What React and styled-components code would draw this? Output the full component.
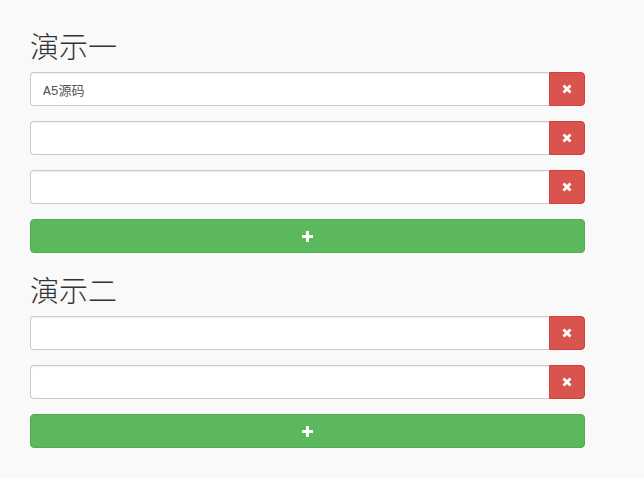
import React from 'react'
import styled, { createGlobalStyle } from 'styled-components'

const Global = createGlobalStyle`
  html, body {
    margin: 0;
    background: #f9f9f9;
    font-family: "Liberation Sans", "Noto Sans CJK SC", sans-serif;
    color: #333;
  }
`

const Page = styled.div`
  padding: 9px 0 0 30px;
  width: 555px;
`

const Title = styled.h2`
  margin: 20px 0 10px;
  font-family: "Noto Sans CJK SC", sans-serif;
  font-size: 29px;
  font-weight: 300;
  line-height: 33px;
  color: #333;
`

const Group = styled.div`
  display: flex;
  height: 34px;
  margin-bottom: 15px;
`

const Field = styled.input`
  flex: 1;
  min-width: 0;
  box-sizing: border-box;
  height: 34px;
  padding: 6px 12px;
  font-family: "Liberation Mono", "Noto Sans CJK SC", monospace;
  font-size: 13px;
  color: #555;
  background: #fff;
  border: 1px solid #ccc;
  border-right: 0;
  border-radius: 4px 0 0 4px;
  box-shadow: inset 0 1px 1px rgba(0, 0, 0, 0.075);
  outline: none;
`

const Remove = styled.button`
  width: 36px;
  height: 34px;
  box-sizing: border-box;
  display: flex;
  align-items: center;
  justify-content: center;
  padding: 0;
  background: #d9534f;
  border: 1px solid #d43f3a;
  border-radius: 0 4px 4px 0;
  cursor: pointer;
`

const Add = styled.button`
  display: flex;
  align-items: center;
  justify-content: center;
  width: 100%;
  height: 34px;
  box-sizing: border-box;
  padding: 0;
  margin-bottom: 15px;
  background: #5cb85c;
  border: 1px solid #4cae4c;
  border-radius: 4px;
  cursor: pointer;
`

const Cross = () => (
  <svg width="10" height="10" viewBox="0 0 10 10">
    <path d="M1.5 1.5 L8.5 8.5 M8.5 1.5 L1.5 8.5" stroke="#fff" strokeWidth="2.8" strokeLinecap="butt" />
  </svg>
)

const Plus = () => (
  <svg width="11" height="11" viewBox="0 0 11 11">
    <path d="M4 0h3v4h4v3H7v4H4V7H0V4h4z" fill="#fff" />
  </svg>
)

const Section = ({ title, values }) => (
  <>
    <Title>{title}</Title>
    {values.map((v, i) => (
      <Group key={i}>
        <Field defaultValue={v} />
        <Remove><Cross /></Remove>
      </Group>
    ))}
    <Add><Plus /></Add>
  </>
)

const App = () => (
  <Page>
    <Global />
    <Section title="演示一" values={['A5源码', '', '']} />
    <Section title="演示二" values={['', '']} />
  </Page>
)

export default App
